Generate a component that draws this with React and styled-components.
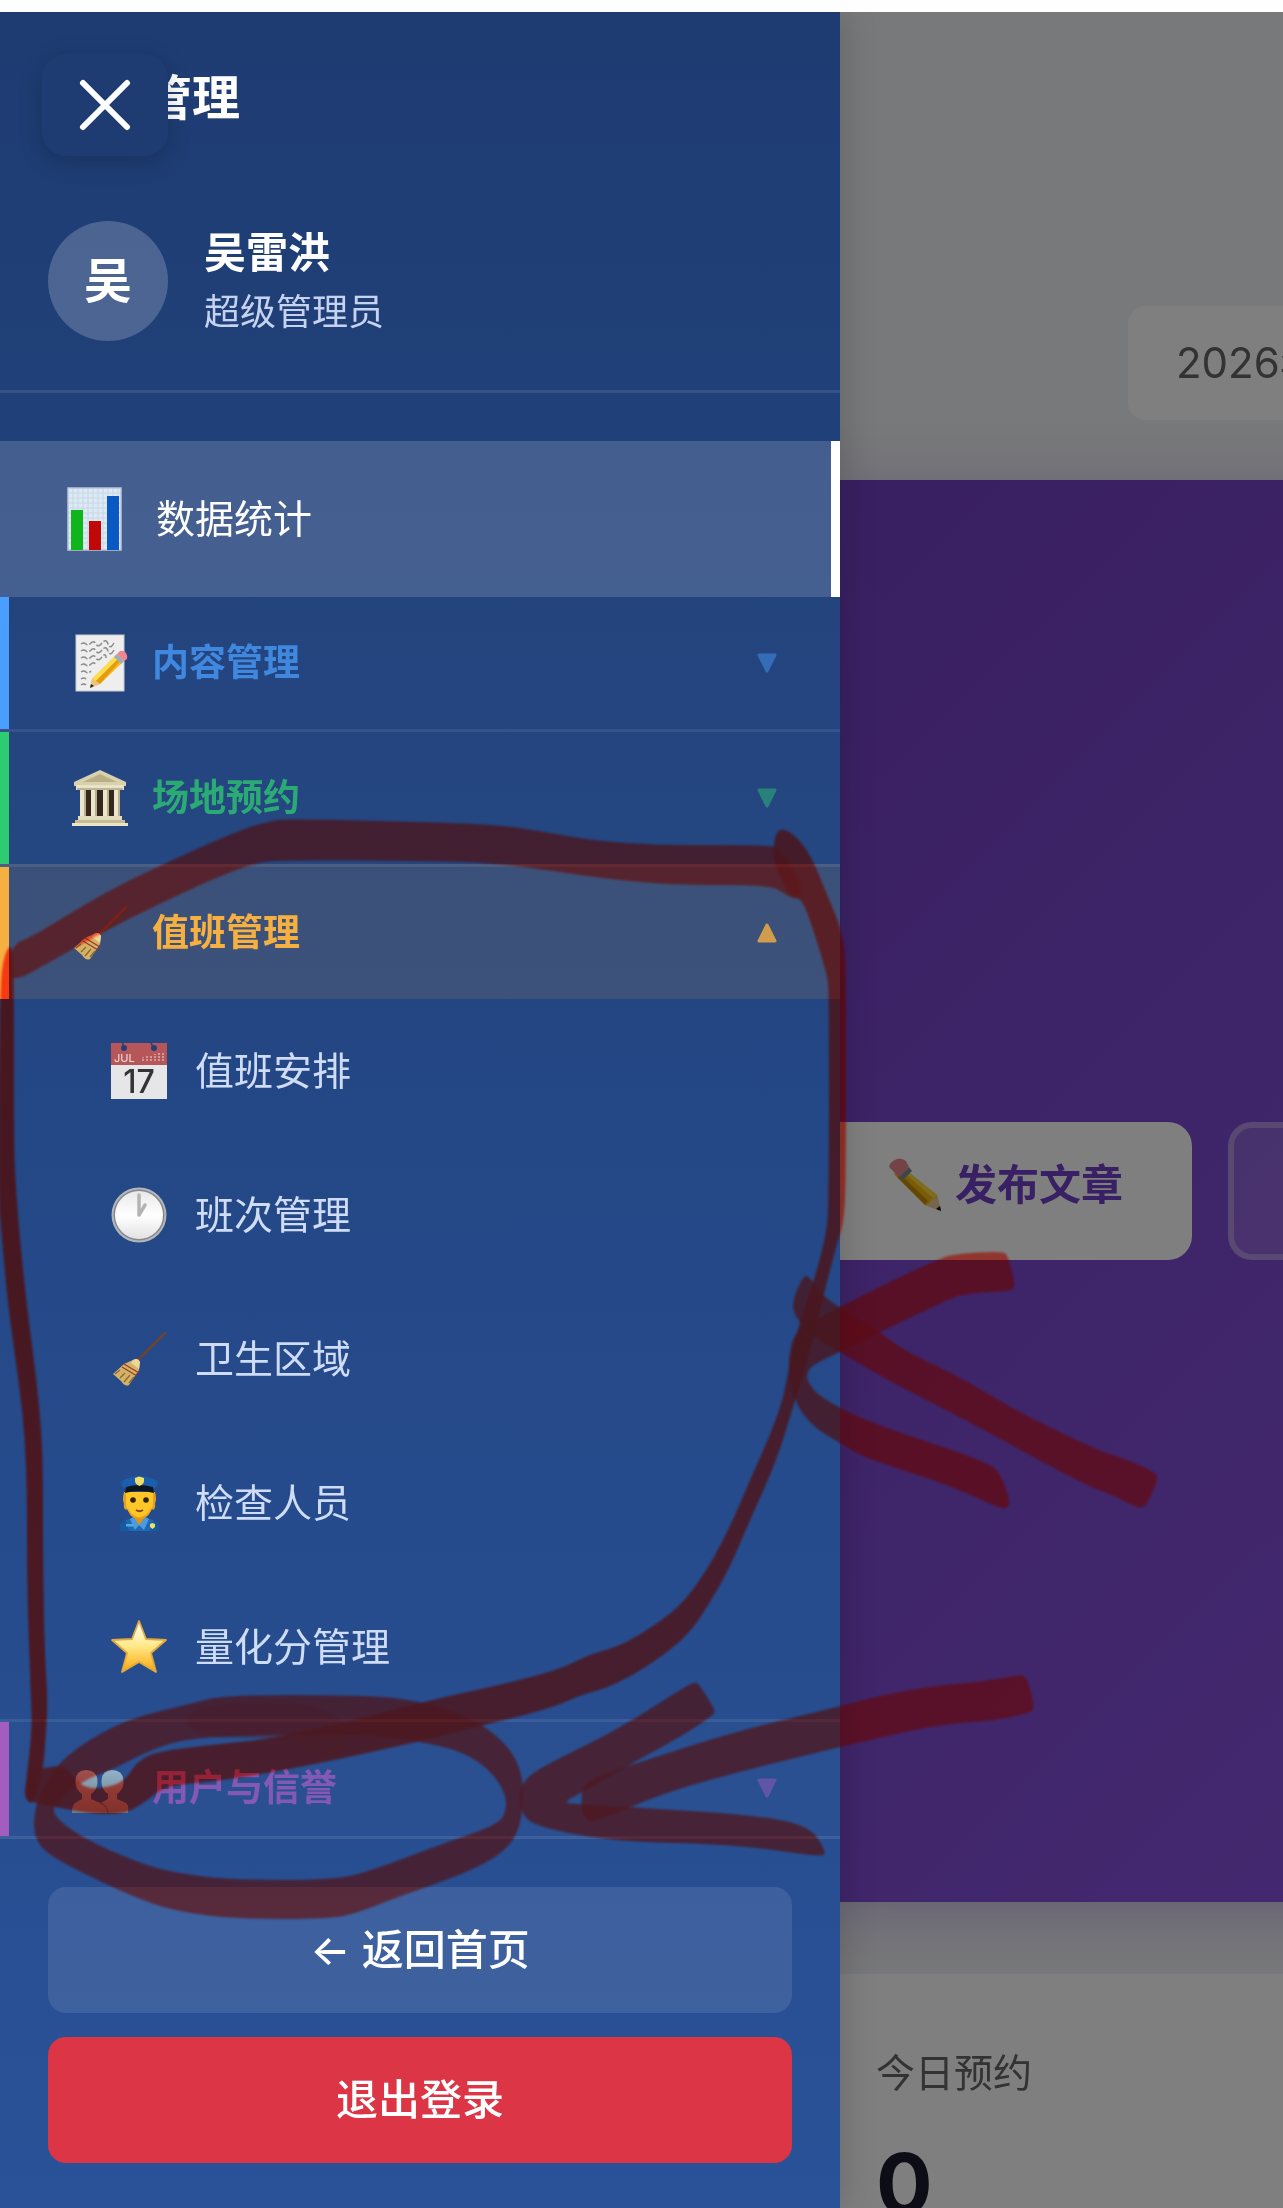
import React, { useState } from "react";
import styled, { createGlobalStyle } from "styled-components";

const GlobalStyle = createGlobalStyle`
  *, *::before, *::after { box-sizing: border-box; }
  body {
    margin: 0;
    background: #fefefe;
    font-family: Inter, "Noto Sans CJK SC", sans-serif;
  }
  button { font-family: inherit; border: 0; cursor: pointer; }
  ul { list-style: none; margin: 0; padding: 0; }
  h1, p { margin: 0; }
`;

/* ---------- shell ---------- */

const Shell = styled.div`
  display: flex;
  flex-direction: column;
  height: 100vh;
  padding-top: 12px;
  overflow: hidden;
`;

const Stage = styled.div`
  position: relative;
  flex: 1;
  min-height: 0;
  overflow: hidden;
  background: #f0f2f5;
`;

const Scrim = styled.div`
  position: absolute;
  inset: 0;
  background: rgba(0, 0, 0, 0.5);
`;

/* ---------- dashboard behind the drawer ---------- */

const Dashboard = styled.main`
  display: flex;
  flex-direction: column;
  gap: 72px;
  margin-left: 816px;
`;

const Top = styled.div`
  display: flex;
  flex-direction: column;
`;

const DateBar = styled.header`
  display: flex;
  padding: 294px 0 60px 312px;
`;

const DatePill = styled.time`
  flex: none;
  padding: 30px 48px;
  border-radius: 18px;
  background: #fff;
  color: #666;
  font-size: 42px;
  line-height: 54px;
  white-space: nowrap;
`;

const Banner = styled.section`
  display: flex;
  gap: 36px;
  margin-right: -120px;
  padding: 642px 0;
  background: linear-gradient(135deg, #7240c4 0%, #8852e0 100%);
  box-shadow: 0 12px 60px rgba(107, 63, 192, 0.3);
`;

const BannerButton = styled.button`
  display: flex;
  flex: none;
  align-items: center;
  gap: 12px;
  min-width: 300px;
  min-height: 138px;
  padding: 35px 69px 47px 71px;
  border: ${(p) => (p.$ghost ? "6px solid rgba(255, 255, 255, 0.3)" : "0")};
  border-radius: 24px;
  background: ${(p) => (p.$ghost ? "rgba(255, 255, 255, 0.15)" : "#fff")};
  color: #7240c8;
  font-size: 42px;
  font-weight: 600;
  line-height: 54px;
`;

const StatCard = styled.section`
  padding: 66px 60px;
  background: #fff;
`;

const StatLabel = styled.p`
  color: #666;
  font-size: 39px;
  line-height: 66px;
`;

const StatValue = styled.p`
  padding-top: 27px;
  color: #1a1a2e;
  font-size: 84px;
  font-weight: 700;
  line-height: 102px;
`;

/* ---------- drawer ---------- */

const Drawer = styled.aside`
  position: absolute;
  top: 0;
  bottom: 0;
  left: 0;
  display: flex;
  flex-direction: column;
  width: 840px;
  max-width: 100%;
  background: linear-gradient(180deg, #1e3c72 0%, #2a5298 100%);
  box-shadow: 6px 0 30px rgba(0, 0, 0, 0.15);
  color: #fff;
`;

const Brand = styled.h1`
  padding: 48px 48px 0;
  font-size: 48px;
  font-weight: 700;
  line-height: 75px;
`;

const CloseButton = styled.button`
  position: absolute;
  top: 42px;
  left: 42px;
  display: grid;
  place-items: center;
  width: 126px;
  height: 102px;
  padding: 0;
  border-radius: 24px;
  background: #1e3c72;
  box-shadow: 0 6px 24px rgba(0, 0, 0, 0.2);
`;

const Profile = styled.div`
  display: flex;
  align-items: center;
  gap: 36px;
  padding: 86px 48px 49px;
  border-bottom: 3px solid rgba(255, 255, 255, 0.1);
`;

const Avatar = styled.div`
  display: grid;
  place-items: center;
  width: 120px;
  height: 120px;
  border-radius: 50%;
  background: rgba(255, 255, 255, 0.2);
  font-size: 48px;
  font-weight: 700;
  line-height: 72px;
`;

const ProfileName = styled.p`
  font-size: 42px;
  font-weight: 600;
  line-height: 63px;
`;

const ProfileRole = styled.p`
  color: #c6d3f0;
  font-size: 36px;
  line-height: 57px;
`;

const Nav = styled.nav`
  flex: 1;
  min-height: 0;
  padding-top: 48px;
  overflow: hidden;
`;

const ActiveItem = styled.button`
  display: flex;
  align-items: center;
  gap: 34px;
  width: 100%;
  height: 156px;
  padding: 0 66px;
  border-right: 9px solid #fff;
  background: rgba(255, 255, 255, 0.16);
  color: #fff;
  font-size: 39px;
  line-height: 60px;
`;

const GroupHeader = styled.button`
  display: flex;
  align-items: center;
  gap: 24px;
  width: 100%;
  height: ${(p) => (p.$first ? "132px" : "135px")};
  padding: 0 60px 0 72px;
  border-top: ${(p) => (p.$first ? "0" : "3px solid rgba(255, 255, 255, 0.08)")};
  background: ${(p) => (p.$open ? "rgba(245, 176, 65, 0.12)" : "rgba(255, 255, 255, 0.01)")};
  box-shadow: inset 9px 0 0 ${(p) => p.$color};
  color: ${(p) => p.$color};
  font-size: 37px;
  font-weight: 600;
  line-height: 60px;
  text-align: left;
`;

const GroupLabel = styled.span`
  flex: 1;
  opacity: ${(p) => (p.$open ? 1 : 0.75)};
`;

const Caret = styled.svg`
  width: 26px;
  height: 26px;
  opacity: ${(p) => (p.$open ? 0.8 : 0.45)};
  transform: ${(p) => (p.$open ? "rotate(180deg)" : "none")};
`;

const SubItem = styled.button`
  display: flex;
  align-items: center;
  gap: 28px;
  width: 100%;
  height: 144px;
  padding: 0 111px;
  background: transparent;
  color: #cfdcf6;
  font-size: 39px;
  line-height: 60px;
`;

const Footer = styled.div`
  display: flex;
  flex-direction: column;
  gap: 24px;
  padding: 48px 48px 45px;
  border-top: 3px solid rgba(255, 255, 255, 0.1);
`;

const FooterButton = styled.button`
  height: 126px;
  border-radius: 18px;
  background: ${(p) => (p.$danger ? "#dc3545" : "rgba(255, 255, 255, 0.1)")};
  color: #fff;
  font-size: 42px;
  font-weight: 500;
  line-height: 60px;
`;

const Glyph = styled.svg`
  display: block;
  flex: none;
  width: 56px;
  height: ${(p) => (p.$tall ? "64px" : "56px")};
  overflow: visible;
`;

/* ---------- pictograms ---------- */

const ChartIcon = () => (
  <Glyph $tall viewBox="0 0 56 64" aria-hidden="true">
    <rect x="2" y="1" width="53" height="62" fill="#dde9f5" />
    <path d="M2 6H55M2 11H55M2 16H55M2 21H55M2 26H55M2 31H55M2 36H55M2 41H55M2 46H55M2 51H55M2 56H55M7 1V63M12 1V63M17 1V63M22 1V63M27 1V63M32 1V63M37 1V63M42 1V63M47 1V63M52 1V63" stroke="#c6d7e6" strokeWidth="1" />
    <rect x="2" y="1" width="53" height="62" fill="none" stroke="#b9c6d8" strokeWidth="1.5" />
    <rect x="5" y="23" width="12" height="40" fill="#10b51c" />
    <rect x="23" y="34" width="12" height="29" fill="#c00808" />
    <rect x="41" y="9" width="12" height="54" fill="#0a58c4" />
  </Glyph>
);

const MemoIcon = () => (
  <Glyph viewBox="0 0 56 56" aria-hidden="true">
    <rect x="4" y="0" width="48" height="56" fill="#eeeeef" stroke="#c9ccd2" />
    <path d="M9 9q3-2 5 0t5-1 5 1 6-1 6 1 6-1M9 16q3-2 5 0t5-1 5 1 6-1 6 1 6-1M9 23q3-2 5 0t5-1 5 1 6-1 4 1M9 30q3-2 5 0t5-1 5 1M9 37q3-2 5 0t5-1M9 44q3-2 5 0M9 50q3-2 5 0" fill="none" stroke="#8b8b8b" strokeWidth="1.5" strokeDasharray="7 2" />
    <path d="M18 53 20 44 45 19 52 26 28 49Z" fill="#f7bd1b" />
    <path d="M20 44 45 19 48 22 24 46Z" fill="#ffdc4c" />
    <path d="M24 46 48 22 50 24 28 49Z" fill="#e49c12" />
    <path d="M18 53 20 44 28 49Z" fill="#ecc489" />
    <path d="M18 53 19 49 22 51Z" fill="#222" />
    <path d="M42 22 45 19 52 26 49 29Z" fill="#9fabb8" />
    <path d="M45 19 48 16Q52 15 54 18T55 24L52 26Z" fill="#ee8591" />
  </Glyph>
);

const MuseumIcon = () => (
  <Glyph viewBox="0 0 56 56" aria-hidden="true">
    <path d="M8 16H48V48H8Z" fill="#35291d" />
    <path d="M28 0 54 12V16H2V12Z" fill="#d9d1ae" />
    <path d="M28 4 45 12H11Z" fill="#b9ae86" />
    <path d="M4 15H52V20H4Z" fill="#e9e3c8" />
    <path d="M5 19H51" stroke="#8f8562" />
    <path d="M8 20H14V47H8ZM19 20H25V47H19ZM31 20H37V47H31ZM42 20H48V47H42Z" fill="#ece6cc" />
    <path d="M13 20V47M24 20V47M36 20V47M47 20V47" stroke="#a99f79" strokeWidth="1.5" />
    <path d="M6 46H50V50H6Z" fill="#e3dcbd" />
    <path d="M3 50H53V53H3Z" fill="#c6bc95" />
    <path d="M0 53H56V56H0Z" fill="#ebe4c8" />
  </Glyph>
);

const BroomIcon = () => (
  <Glyph viewBox="0 0 56 56" aria-hidden="true">
    <path d="M54 2 27 29" stroke="#6b4434" strokeWidth="2.5" strokeLinecap="round" />
    <path d="M22 29Q27 26 29 31L28 39 18 54Q14 56 10 50L2 43 13 33Z" fill="#d3b269" />
    <path d="M22 29Q27 26 29 31L28 38 20 32Z" fill="#ecd796" />
    <path d="M13 33 28 42M11 36 26 45" stroke="#9c3b22" strokeWidth="1.3" />
    <path d="M9 39 4 43M14 42 9 47M19 44 13 51M23 46 18 52" stroke="#8e692b" strokeWidth="1.3" />
  </Glyph>
);

const CalendarText = styled.text`
  font-family: Inter, sans-serif;
  font-size: ${(p) => (p.$day ? "32px" : "11px")};
  font-weight: ${(p) => (p.$day ? 500 : 400)};
`;

const CalendarIcon = () => (
  <Glyph viewBox="0 0 56 56" aria-hidden="true">
    <rect width="56" height="56" fill="#e6e6e8" />
    <rect width="56" height="22" fill="#b65659" />
    <circle cx="13" cy="5" r="3" fill="#243f78" />
    <circle cx="43" cy="5" r="3" fill="#243f78" />
    <path d="M12 0V4M40 0 42 4" stroke="#243f78" strokeWidth="1.5" />
    <path d="M32 18V14M36 18V13M40 18V12M44 18V11M48 18V10M52 18V10" stroke="#d39a9b" strokeWidth="2" strokeDasharray="2 1" />
    <CalendarText x="3" y="19" fill="#f3dede">JUL</CalendarText>
    <CalendarText $day x="28" y="50" textAnchor="middle" fill="#333">17</CalendarText>
  </Glyph>
);

const ClockIcon = () => (
  <Glyph viewBox="0 0 56 56" aria-hidden="true">
    <defs>
      <linearGradient id="clockFace" x1="0" y1="0" x2="0" y2="1">
        <stop offset="0" stopColor="#e8e8e8" />
        <stop offset="0.5" stopColor="#ffffff" />
        <stop offset="1" stopColor="#e2e2e2" />
      </linearGradient>
    </defs>
    <circle cx="28" cy="28" r="27.5" fill="#b3b6ba" />
    <circle cx="28" cy="28" r="25.5" fill="#85898e" />
    <circle cx="28" cy="28" r="24" fill="url(#clockFace)" />
    <path d="M28 8V28L34 18" fill="none" stroke="#b4b4b4" strokeWidth="3.5" strokeLinecap="round" strokeLinejoin="round" />
  </Glyph>
);

const OfficerIcon = () => (
  <Glyph viewBox="0 0 56 56" aria-hidden="true">
    <path d="M9 56Q8 46 17 44.500L23 42H33L40 44.500Q48 46 48 56Z" fill="#1d6ab4" />
    <path d="M9 56Q8 47 15 45L18 56ZM48 56Q49 47 42 45L39 56Z" fill="#155a9c" />
    <path d="M23 38H34V44L28 51 23 44Z" fill="#e0960e" />
    <path d="M19 44 23 42 28 50 24 55ZM38 44 34 42 28 50 33 55Z" fill="#4c9be0" />
    <path d="M13 17Q11 24 13 29 12 33 15 35L17 33V17ZM44 17Q46 24 44 29 45 33 42 35L40 33V17Z" fill="#e2a024" />
    <path d="M15 17H42V27Q42 36 36 40 28 45 21 40 15 36 15 27Z" fill="#ffc628" />
    <path d="M17 32Q19 41 28 42.500 38 41 40 32 40 43 28 44 17 43 17 32Z" fill="#ee9f14" />
    <circle cx="22" cy="25" r="2.800" fill="#33200f" />
    <circle cx="35" cy="25" r="2.800" fill="#33200f" />
    <path d="M25 35Q28.500 37.500 32 35" fill="none" stroke="#8d461d" strokeWidth="1.800" />
    <path d="M10 8Q11 5 18 3 28-1 39 3 46 5 47 8 46 12 42 14H15Q11 12 10 8Z" fill="#1a5fae" />
    <path d="M15 12Q28 8 42 12L43 18Q28 14 14 18Z" fill="#10161f" />
    <path d="M24 3 28 1.500 33 3V6Q33 9 28.500 11 24 9 24 6Z" fill="#efdf62" />
    <path d="M39 49 41.500 48 44 49V52L41.500 54 39 52Z" fill="#efe06a" />
    <path d="M15 49H23V51.500H15Z" fill="#56a4e4" />
  </Glyph>
);

const StarIcon = () => (
  <Glyph viewBox="0 0 56 56" aria-hidden="true">
    <defs>
      <linearGradient id="starFill" x1="0" y1="0" x2="0" y2="1">
        <stop offset="0.1" stopColor="#fffbe8" />
        <stop offset="0.5" stopColor="#ffe886" />
        <stop offset="1" stopColor="#f7a70d" />
      </linearGradient>
    </defs>
    <path d="M28 2 35 20 55 21 40 34 45 53 28 43 11 53 16 34 1 21 21 20Z" fill="url(#starFill)" stroke="#e5a83c" strokeWidth="1.8" strokeLinejoin="round" />
  </Glyph>
);

const Bust = ({ x }) => (
  <path
    transform={`translate(${x} 0)`}
    d="M14 10Q26 10 25.500 23 25 30 19 34V39L28 43Q31 45 30 53H0Q0 45 3 43L10 39V34Q4 30 3.500 23 3 10 14 10Z"
    fill="url(#bustFill)"
  />
);

const PeopleIcon = () => (
  <Glyph viewBox="0 0 56 56" aria-hidden="true">
    <defs>
      <linearGradient id="bustFill" gradientUnits="userSpaceOnUse" x1="0" y1="10" x2="0" y2="53">
        <stop offset="0" stopColor="#93b4cc" />
        <stop offset="0.4" stopColor="#8099a8" />
        <stop offset="1" stopColor="#6d7f86" />
      </linearGradient>
    </defs>
    <Bust x={26} />
    <Bust x={0} />
    <path d="M28 43Q35 45 36 53" fill="none" stroke="#55666c" strokeWidth="1.5" />
  </Glyph>
);

const PencilIcon = () => (
  <Glyph viewBox="0 0 56 56" aria-hidden="true">
    <path d="M15 10 50 38 54 54 38 48 7 17Z" fill="#f0b90e" />
    <path d="M19 13 50 38 47 42 15 14Z" fill="#ffd93e" />
    <path d="M10 20 38 48 41 44 13 17Z" fill="#cc8c08" />
    <path d="M50 38 54 54 38 48Q44 46 44 42 49 43 50 38Z" fill="#edcc96" />
    <path d="M54 54 53 49 49 52Z" fill="#111" />
    <path d="M12 20 22 10 25 14 16 23Z" fill="#7b8c99" />
    <path d="M12 20 22 10 19 4Q13-1 6 4T5 13Z" fill="#e98790" />
  </Glyph>
);

const CloseIcon = () => (
  <svg width="54" height="54" viewBox="0 0 54 54" aria-hidden="true">
    <path d="M5 5 49 49M49 5 5 49" stroke="#fff" strokeWidth="6" strokeLinecap="round" />
  </svg>
);

/* ---------- red marker notes ---------- */

const marks = [
  { o: 0.8, p: "14,943 30,938 100,895 167,862 240,830 270,821 287,819 430,822 500,825 545,832 590,840 650,845 765,845 780,848 800,880 803,894 794,899 785,894 770,885 670,885 600,878 540,869 490,863 430,861 280,860 255,863 210,880 130,918 80,945 50,962 14,982 6,970" },
  { o: 0.97, p: "12,942 4,955 0,985 -2,1190 2,1240 8,1307 20,1390 25,1440 27,1493 27,1590 31,1700 32,1730 26,1782 24,1798 34,1806 43,1770 45,1747 48,1702 45,1660 43,1573 43,1480 42,1440 37,1383 27,1307 20,1240 16,1190 14,1150 14,980" },
  { o: 0.88, p: "777,831 785,829 800,840 813,860 825,890 840,925 845,950 846,980 846,1190 843,1225 838,1240 823,1297 807,1363 795,1400 777,1460 750,1520 730,1567 710,1603 687,1637 647,1667 610,1687 581,1695 549,1709 472,1728 417,1742 340,1759 274,1772 219,1781 165,1786 148,1800 126,1814 93,1814 44,1805 25,1800 30,1775 43,1767 66,1766 75,1780 90,1790 123,1784 137,1761 159,1751 219,1744 269,1739 351,1721 422,1702 513,1682 563,1668 590,1654 617,1647 643,1633 680,1607 707,1570 730,1527 750,1480 768,1440 782,1403 788,1373 797,1330 812,1287 825,1240 829,1210 829,990 827,975 815,935 802,898 790,898 773,862 774,842" },
  { o: 0.8, p: "189,1704 225,1695 362,1695 417,1700 472,1718 505,1742 521,1768 524,1800 518,1835 499,1856 461,1875 395,1898 357,1913 329,1919 236,1919 181,1912 143,1901 82,1873 44,1852 34,1835 34,1814 41,1789 60,1761 93,1737 132,1718", i: "187,1738 148,1751 118,1767 82,1781 60,1800 50,1813 82,1838 137,1862 170,1872 230,1880 335,1880 373,1870 439,1845 494,1826 506,1814 506,1793 488,1768 461,1751 417,1741 362,1734 274,1735" },
  { o: 0.3, p: "187,1704 304,1702 330,1713 348,1724 344,1758 325,1754 290,1738 187,1738" },
  { o: 0.82, p: "1003,1251 1008,1256 1015,1283 1013,1290 1005,1291 963,1294 947,1300 880,1332 840,1352 812,1365 806,1375 810,1386 820,1396 840,1408 863,1419 903,1434 947,1448 987,1463 1000,1472 1011,1503 1006,1509 997,1507 953,1487 903,1470 863,1457 840,1443 818,1430 803,1415 795,1400 788,1372 790,1347 797,1330 820,1317 840,1307 887,1283 937,1260 953,1254" },
  { o: 0.8, p: "807,1273 800,1282 792,1303 795,1317 813,1337 840,1352 887,1380 970,1422 1053,1468 1093,1488 1113,1495 1137,1508 1146,1507 1158,1480 1156,1472 1120,1457 1097,1450 1020,1413 960,1377 903,1350 880,1332 840,1308 820,1293" },
  { o: 0.8, p: "695,1682 686,1686 620,1728 570,1753 527,1775 518,1795 523,1817 538,1826 576,1835 631,1842 713,1844 768,1849 821,1857 827,1852 808,1824 741,1814 658,1809 581,1804 562,1803 581,1793 636,1761 680,1737 714,1715 715,1709 698,1683" },
  { o: 0.8, p: "581,1788 595,1777 631,1765 730,1733 820,1711 840,1706 887,1694 940,1685 980,1682 1018,1675 1027,1676 1035,1708 1030,1713 993,1721 943,1724 887,1736 840,1747 730,1774 658,1795 594,1823 582,1818" },
];

const smooth = (list) => {
  const pts = list.split(" ").map((s) => s.split(",").map(Number));
  const mid = (a, b) => `${(a[0] + b[0]) / 2} ${(a[1] + b[1]) / 2}`;
  const last = pts[pts.length - 1];
  return `M${mid(last, pts[0])}${pts
    .map((p, i) => `Q${p[0]} ${p[1]} ${mid(p, pts[(i + 1) % pts.length])}`)
    .join("")}Z`;
};

const InkLayer = styled.svg`
  position: absolute;
  top: 0;
  left: 0;
  overflow: visible;
  pointer-events: none;
  mix-blend-mode: ${(p) => p.$blend};
  filter: blur(1px);
`;

const Ink = ({ blend, color }) => (
  <InkLayer $blend={blend} width="1283" height="2208" viewBox="0 0 1283 2208" aria-hidden="true">
    {marks.map((m, i) => (
      <path key={i} d={smooth(m.p) + (m.i ? smooth(m.i) : "")} fill={color} fillOpacity={m.o} fillRule="evenodd" />
    ))}
  </InkLayer>
);

/* ---------- navigation data ---------- */

const groups = [
  { id: "content", label: "内容管理", color: "#4a9eff", Icon: MemoIcon, items: [] },
  { id: "venue", label: "场地预约", color: "#2ecc71", Icon: MuseumIcon, items: [] },
  {
    id: "duty",
    label: "值班管理",
    color: "#f5b041",
    Icon: BroomIcon,
    items: [
      { label: "值班安排", Icon: CalendarIcon },
      { label: "班次管理", Icon: ClockIcon },
      { label: "卫生区域", Icon: BroomIcon },
      { label: "检查人员", Icon: OfficerIcon },
      { label: "量化分管理", Icon: StarIcon },
    ],
  },
  { id: "users", label: "用户与信誉", color: "#a35cc0", Icon: PeopleIcon, items: [] },
];

function NavGroup({ group, first, open, onToggle }) {
  const { Icon } = group;
  return (
    <li>
      <GroupHeader type="button" $first={first} $open={open} $color={group.color} aria-expanded={open} onClick={onToggle}>
        <Icon />
        <GroupLabel $open={open}>{group.label}</GroupLabel>
        <Caret $open={open} viewBox="0 0 26 26" aria-hidden="true">
          <path d="M5 5H21L13 21Z" fill="currentColor" stroke="currentColor" strokeWidth="3" strokeLinejoin="round" />
        </Caret>
      </GroupHeader>
      {open && (
        <ul>
          {group.items.map((item) => (
            <li key={item.label}>
              <SubItem type="button">
                <item.Icon />
                {item.label}
              </SubItem>
            </li>
          ))}
        </ul>
      )}
    </li>
  );
}

export default function App() {
  const [openId, setOpenId] = useState("duty");

  return (
    <>
      <GlobalStyle />
      <Shell>
        <Stage>
          <Dashboard>
            <Top>
              <DateBar>
                <DatePill>2026年</DatePill>
              </DateBar>
              <Banner>
                <BannerButton type="button">
                  <PencilIcon />
                  发布文章
                </BannerButton>
                <BannerButton type="button" $ghost aria-label="更多操作" />
              </Banner>
            </Top>
            <StatCard>
              <StatLabel>今日预约</StatLabel>
              <StatValue>0</StatValue>
            </StatCard>
          </Dashboard>
          <Scrim />
          <Drawer>
            <Brand>后台管理</Brand>
            <CloseButton type="button" aria-label="关闭菜单">
              <CloseIcon />
            </CloseButton>
            <Profile>
              <Avatar>吴</Avatar>
              <div>
                <ProfileName>吴雷洪</ProfileName>
                <ProfileRole>超级管理员</ProfileRole>
              </div>
            </Profile>
            <Nav>
              <ActiveItem type="button" aria-current="page">
                <ChartIcon />
                数据统计
              </ActiveItem>
              <ul>
                {groups.map((g, i) => (
                  <NavGroup
                    key={g.id}
                    group={g}
                    first={i === 0}
                    open={openId === g.id}
                    onToggle={() => setOpenId(openId === g.id ? "" : g.id)}
                  />
                ))}
              </ul>
            </Nav>
            <Footer>
              <FooterButton type="button">← 返回首页</FooterButton>
              <FooterButton type="button" $danger>
                退出登录
              </FooterButton>
            </Footer>
          </Drawer>
        </Stage>
      </Shell>
      <Ink blend="multiply" color="#ff4b38" />
      <Ink blend="screen" color="#2a0000" />
    </>
  );
}
